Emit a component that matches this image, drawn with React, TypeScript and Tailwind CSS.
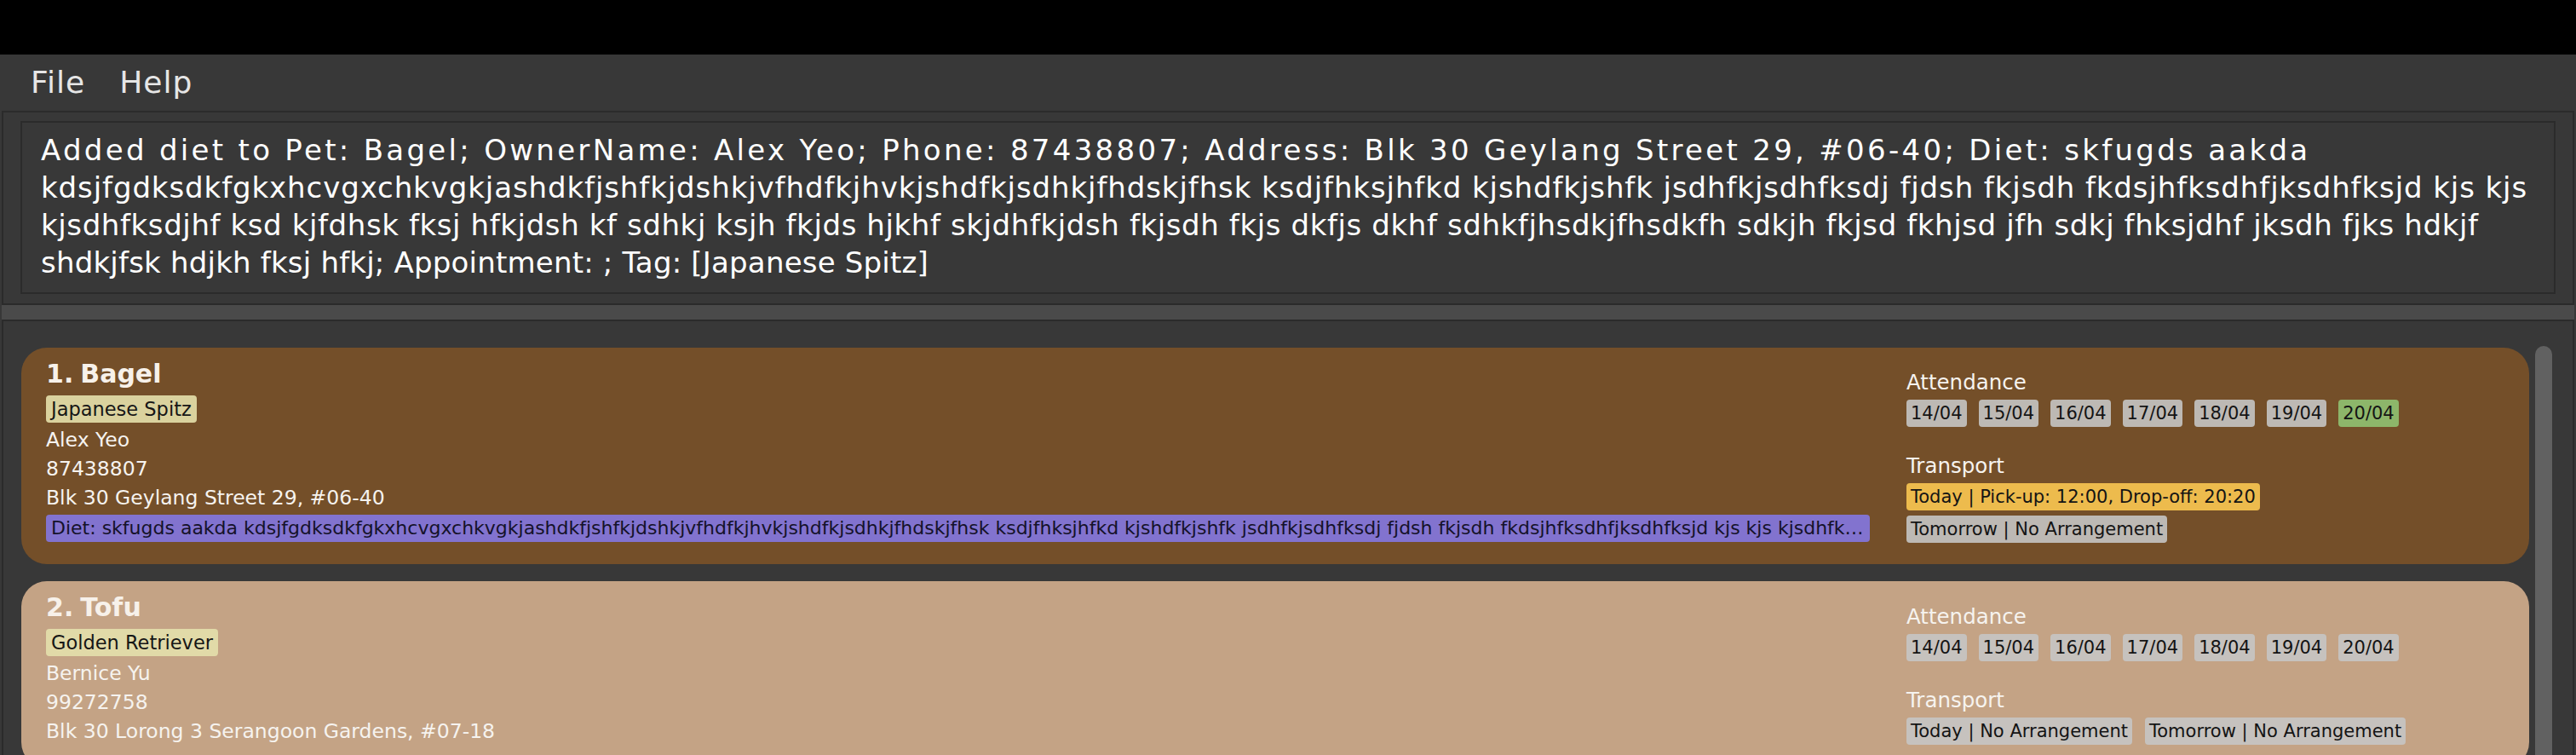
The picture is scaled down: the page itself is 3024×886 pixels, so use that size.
import React from "react";

type Chip = { label: string; tone: "gray" | "green" | "orange" };

interface Pet {
  index: number;
  name: string;
  tag: string;
  owner: string;
  phone: string;
  address: string;
  diet?: string;
  dates: Chip[];
  transport: Chip[];
  dark: boolean;
}

const dietText =
  "skfugds aakda kdsjfgdksdkfgkxhcvgxchkvgkjashdkfjshfkjdshkjvfhdfkjhvkjshdfkjsdhkjfhdskjfhsk ksdjfhksjhfkd kjshdfkjshfk jsdhfkjsdhfksdj fjdsh fkjsdh fkdsjhfksdhfjksdhfksjd kjs kjs kjsdhfksdjhf ksd kjfdhsk fksj hfkjdsh kf sdhkj ksjh fkjds hjkhf skjdhfkjdsh fkjsdh fkjs dkfjs dkhf sdhkfjhsdkjfhsdkfh sdkjh fkjsd fkhjsd jfh sdkj fhksjdhf jksdh fjks hdkjf shdkjfsk hdjkh fksj hfkj";

// the feedback box wraps at these points; tracking keeps each line at its width
const resultLines = [
  {
    text: "Added diet to Pet: Bagel; OwnerName: Alex Yeo; Phone: 87438807; Address: Blk 30 Geylang Street 29, #06-40; Diet: skfugds aakda",
    track: "tracking-[3.3px]",
  },
  {
    text: "kdsjfgdksdkfgkxhcvgxchkvgkjashdkfjshfkjdshkjvfhdfkjhvkjshdfkjsdhkjfhdskjfhsk ksdjfhksjhfkd kjshdfkjshfk jsdhfkjsdhfksdj fjdsh fkjsdh fkdsjhfksdhfjksdhfksjd kjs kjs",
    track: "tracking-[0.9px]",
  },
  {
    text: "kjsdhfksdjhf ksd kjfdhsk fksj hfkjdsh kf sdhkj ksjh fkjds hjkhf skjdhfkjdsh fkjsdh fkjs dkfjs dkhf sdhkfjhsdkjfhsdkfh sdkjh fkjsd fkhjsd jfh sdkj fhksjdhf jksdh fjks hdkjf",
    track: "tracking-[0.6px]",
  },
  {
    text: "shdkjfsk hdjkh fksj hfkj; Appointment: ; Tag: [Japanese Spitz]",
    track: "tracking-[0.2px]",
  },
];

const week = ["14/04", "15/04", "16/04", "17/04", "18/04", "19/04", "20/04"];

const pets: Pet[] = [
  {
    index: 1,
    name: "Bagel",
    tag: "Japanese Spitz",
    owner: "Alex Yeo",
    phone: "87438807",
    address: "Blk 30 Geylang Street 29, #06-40",
    diet: dietText,
    dates: week.map((d, i) => ({ label: d, tone: i === 6 ? "green" : "gray" })),
    transport: [
      { label: "Today | Pick-up: 12:00, Drop-off: 20:20", tone: "orange" },
      { label: "Tomorrow | No Arrangement", tone: "gray" },
    ],
    dark: true,
  },
  {
    index: 2,
    name: "Tofu",
    tag: "Golden Retriever",
    owner: "Bernice Yu",
    phone: "99272758",
    address: "Blk 30 Lorong 3 Serangoon Gardens, #07-18",
    dates: week.map((d) => ({ label: d, tone: "gray" })),
    transport: [
      { label: "Today | No Arrangement", tone: "gray" },
      { label: "Tomorrow | No Arrangement", tone: "gray" },
    ],
    dark: false,
  },
];

function SmallChip({ chip, dark }: { chip: Chip; dark: boolean }) {
  const bg =
    chip.tone === "green"
      ? "bg-[#8db66a]"
      : chip.tone === "orange"
        ? "bg-[#edbb4d]"
        : dark
          ? "bg-[#bdb9b4]"
          : "bg-[#c6c2be]";
  return (
    <span
      className={`h-[32px] px-[5px] rounded-[4px] text-[21px] leading-[32px] text-[#141414] whitespace-nowrap ${bg}`}
    >
      {chip.label}
    </span>
  );
}

function PetCard({ pet }: { pet: Pet }) {
  return (
    <div
      className={`flex rounded-[30px] pl-[29px] pr-[31px] pt-[11px] pb-[26px] ${
        pet.dark ? "bg-[#744f29]" : "bg-[#c4a385]"
      }`}
    >
      {/* left: pet details */}
      <div className="flex-1 min-w-0 flex flex-col items-start text-[#f6f3ef] text-[23.5px] leading-[34px]">
        <div className="flex font-bold text-[30px] leading-[40px] text-[#f7f1ea]">
          <span>{pet.index}.</span>
          <span className="ml-[8px]">{pet.name}</span>
        </div>
        <span
          className={`mt-[5px] h-[32px] px-[6px] rounded-[4px] text-[22.5px] leading-[32px] text-[#161616] ${
            pet.dark ? "bg-[#dad29e]" : "bg-[#e1daa8]"
          }`}
        >
          {pet.tag}
        </span>
        <div className="mt-[3px]">{pet.owner}</div>
        <div>{pet.phone}</div>
        <div>{pet.address}</div>
        {pet.diet && (
          <div className="mt-[3px] w-full h-[32px] px-[6px] rounded-[4px] bg-[#8273cf] text-[22px] leading-[32px] text-[#15122a] truncate">
            Diet: {pet.diet}
          </div>
        )}
      </div>

      {/* right: attendance + transport, centred a little below the middle */}
      <div className="ml-[43px] mt-[7px] -mb-[7px] w-[700px] self-center flex flex-col text-[#f6f3ef]">
        <div className="text-[24.5px] leading-[32px]">Attendance</div>
        <div className="mt-[4px] flex flex-wrap gap-x-[14px] gap-y-[6px]">
          {pet.dates.map((c) => (
            <SmallChip key={c.label} chip={c} dark={pet.dark} />
          ))}
        </div>
        <div className="mt-[30px] text-[24.5px] leading-[32px]">Transport</div>
        <div className="mt-[4px] flex flex-wrap gap-x-[15px] gap-y-[6px]">
          {pet.transport.map((c) => (
            <SmallChip key={c.label} chip={c} dark={pet.dark} />
          ))}
        </div>
      </div>
    </div>
  );
}

export default function App() {
  return (
    <div className="w-[3024px] h-[886px] overflow-hidden bg-[#383838] flex flex-col font-['DejaVu_Sans',sans-serif]">
      {/* window title strip */}
      <div className="h-[64px] shrink-0 bg-black" />

      {/* menu bar */}
      <div className="h-[66px] shrink-0 flex items-center gap-[40px] pl-[36px] text-[36px] leading-[66px] tracking-[1px] text-[#e6e6e6]">
        <span>File</span>
        <span>Help</span>
      </div>

      {/* result display */}
      <div className="mx-[2px] shrink-0 border-2 border-[#2b2b2b] px-[20px] pt-[10px] pb-[11px]">
        <div className="border-2 border-[#2b2b2b] pl-[22px] pt-[10px] pb-[13px] text-[34px] leading-[44px] text-white">
          {resultLines.map((line) => (
            <div key={line.text} className={`whitespace-nowrap ${line.track}`}>
              {line.text}
            </div>
          ))}
        </div>
      </div>

      {/* split divider */}
      <div className="mx-[2px] h-[17px] shrink-0 bg-[#4a4a4a]" />

      {/* pet list */}
      <div className="mx-[2px] flex-1 min-h-0 border-2 border-b-0 border-[#2b2b2b] flex pt-[29px] pl-[21px]">
        <div className="flex-1 min-w-0 pt-[2px] flex flex-col gap-[20px]">
          {pets.map((p) => (
            <PetCard key={p.index} pet={p} />
          ))}
        </div>
        <div className="ml-[7px] mr-[24px] w-[20px] shrink-0 rounded-t-[10px] bg-[#616161]" />
      </div>
    </div>
  );
}
